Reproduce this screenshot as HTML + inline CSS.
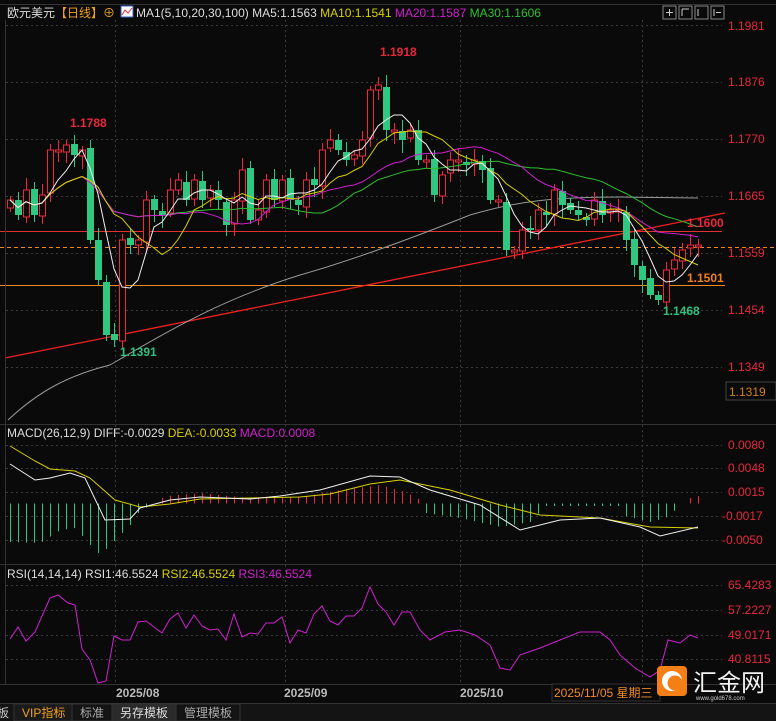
<!DOCTYPE html>
<html><head><meta charset="utf-8"><style>
html,body{margin:0;padding:0;background:#0a0a0a;width:776px;height:721px;overflow:hidden;font-family:"Liberation Sans","Noto Sans CJK SC",sans-serif}
svg{position:absolute;left:0;top:0}
</style></head><body>
<svg id="s" width="776" height="721" xmlns="http://www.w3.org/2000/svg" font-family="Liberation Sans, Noto Sans CJK SC, sans-serif">
<rect width="776" height="721" fill="#0a0a0a"/>
<g id="grid" stroke="#3a3a3a" stroke-dasharray="2,3" stroke-width="1"></g>
<g id="main"></g>
<line x1="0" y1="424.5" x2="776" y2="424.5" stroke="#333"/>
<line x1="0" y1="564.5" x2="776" y2="564.5" stroke="#333"/>
<line x1="0" y1="684.5" x2="776" y2="684.5" stroke="#333"/>
<line x1="5.5" y1="20" x2="5.5" y2="684" stroke="#333"/>
<line x1="0" y1="4.5" x2="776" y2="4.5" stroke="#333"/>
<text x="7" y="17" font-size="12"><tspan fill="#ddd">欧元美元</tspan><tspan fill="#f0a020">【日线】</tspan><tspan fill="#f0a020">⊕</tspan></text>
<rect x="121" y="6" width="12" height="11" fill="#fff" stroke="#3060c0"/>
<polyline points="122,15 125,10 128,13 132,8" fill="none" stroke="#e03040"/>
<text x="136" y="17" font-size="12" fill="#ddd">MA1(5,10,20,30,100) MA5:1.1563 <tspan fill="#d8d000">MA10:1.1541</tspan> <tspan fill="#d020d0">MA20:1.1587</tspan> <tspan fill="#30c030">MA30:1.1606</tspan></text>
<g fill="none" stroke="#888">
<rect x="663" y="6" width="13" height="13"/><rect x="679" y="6" width="13" height="13"/><rect x="695" y="6" width="13" height="13"/><rect x="711" y="6" width="13" height="13"/></g>
<g stroke="#ccc" stroke-width="1"><line x1="666" y1="12.5" x2="673" y2="12.5"/><line x1="669.5" y1="9" x2="669.5" y2="16"/><line x1="682" y1="9" x2="682" y2="16"/><line x1="682" y1="9" x2="689" y2="9"/><line x1="698" y1="9" x2="698" y2="16"/><line x1="714" y1="9" x2="714" y2="16"/><line x1="716" y1="12.5" x2="721" y2="12.5"/></g>
<g font-size="12" fill="#e8283c">
<text x="728" y="30">1.1981</text><text x="728" y="86">1.1876</text><text x="728" y="143">1.1770</text><text x="728" y="200">1.1665</text><text x="728" y="257">1.1559</text><text x="728" y="314">1.1454</text><text x="728" y="371">1.1349</text>
</g>
<rect x="726" y="382" width="50" height="18" fill="#0a0a0a" stroke="#444"/>
<text x="729" y="396" font-size="12" fill="#d08020">1.1319</text>
<g font-size="12" font-weight="bold">
<text x="380" y="56" fill="#e8283c">1.1918</text>
<text x="70" y="127" fill="#e8283c">1.1788</text>
<text x="120" y="356" fill="#30c080">1.1391</text>
<text x="663" y="315" fill="#30c080">1.1468</text>
<text x="687" y="227" fill="#e8283c">1.1600</text>
<text x="687" y="282" fill="#f08020">1.1501</text>
</g>
<text x="7" y="437" font-size="12" fill="#ddd">MACD(26,12,9) DIFF:-0.0029 <tspan fill="#d8d000">DEA:-0.0033</tspan> <tspan fill="#d020d0">MACD:0.0008</tspan></text>
<g font-size="12" fill="#e8283c"><text x="728" y="449">0.0080</text><text x="728" y="472">0.0048</text><text x="728" y="496">0.0015</text><text x="722" y="520">-0.0017</text><text x="722" y="544">-0.0050</text></g>
<text x="7" y="578" font-size="12" fill="#ddd">RSI(14,14,14) RSI1:46.5524 <tspan fill="#d8d000">RSI2:46.5524</tspan> <tspan fill="#d020d0">RSI3:46.5524</tspan></text>
<g font-size="12" fill="#e8283c"><text x="728" y="589">65.4283</text><text x="728" y="614">57.2227</text><text x="728" y="639">49.0171</text><text x="728" y="663">40.8115</text></g>
<g font-size="12" font-weight="bold" fill="#bbb"><text x="116" y="697">2025/08</text><text x="284" y="697">2025/09</text><text x="460" y="697">2025/10</text></g>
<rect x="552" y="684" width="108" height="17" fill="#0a0a0a" stroke="#333"/>
<text x="554" y="697" font-size="12" fill="#f08a20">2025/11/05 星期三</text>
<rect x="657" y="666" width="30" height="30" rx="4" fill="#f57f17"/>
<circle cx="672" cy="681" r="10" fill="#fff"/>
<circle cx="675" cy="683" r="7.5" fill="#f57f17"/>
<text x="693" y="691" font-size="24" fill="#f2f2f2" font-family="Noto Sans CJK SC, sans-serif">汇金网</text>
<text x="696" y="700" font-size="6" fill="#ccc">www.gold678.com</text>
<rect x="0" y="703" width="776" height="18" fill="#141414"/>
<line x1="0" y1="703.5" x2="776" y2="703.5" stroke="#333"/>
<g font-size="12"><text x="-3" y="717" fill="#ccc">板</text>
<rect x="14" y="704" width="58" height="17" fill="#1a1a1a" stroke="#333"/><text x="22" y="717" fill="#f0a020">VIP指标</text>
<rect x="72" y="704" width="40" height="17" fill="#141414" stroke="#333"/><text x="80" y="717" fill="#aaa">标准</text>
<rect x="112" y="704" width="64" height="17" fill="#2a2a2a" stroke="#333"/><text x="120" y="717" fill="#ddd">另存模板</text>
<rect x="176" y="704" width="64" height="17" fill="#141414" stroke="#333"/><text x="184" y="717" fill="#aaa">管理模板</text></g>
</svg>
<script>
(function(){
var NS="http://www.w3.org/2000/svg",M=document.getElementById('main'),G=document.getElementById('grid');
function el(p,t,a){var e=document.createElementNS(NS,t);for(var k in a)e.setAttribute(k,a[k]);p.appendChild(e);return e;}
[25,82,139,196,253,310,367,445,468,492,516,540,585,610,635,659].forEach(function(y){el(G,'line',{x1:6,y1:y+.5,x2:722,y2:y+.5});});
[115,285,460,642].forEach(function(x){el(G,'line',{x1:x+.5,y1:20,x2:x+.5,y2:684});});
var cy=[200,215,190,215,195,150,150,145,155,150,240,280,335,340,240,245,240,200,210,215,190,180,200,180,200,190,200,225,200,170,220,210,180,200,180,200,205,180,185,150,140,150,160,155,140,90,85,130,130,140,130,160,160,195,175,160,160,165,160,170,200,200,250,250,230,230,210,215,190,205,210,215,220,200,215,210,210,240,265,280,295,300,270,260,250,245,245];
var n=cy.length,x0=10,dx=8;
function px(i){return x0+i*dx;}
el(M,'line',{x1:0,y1:231.5,x2:722,y2:231.5,stroke:'#e03030'});
el(M,'line',{x1:0,y1:247.5,x2:776,y2:247.5,stroke:'#f08a20','stroke-dasharray':'4,3'});
el(M,'line',{x1:0,y1:285.5,x2:725,y2:285.5,stroke:'#f08a20'});
el(M,'line',{x1:5,y1:358,x2:725,y2:213,stroke:'#f02020','stroke-width':1.3});
el(M,'path',{d:'M8,420 C40,390 70,375 110,365 C170,330 220,300 300,275 C360,258 420,235 470,215 C520,200 560,197 620,197 L698,198',fill:'none',stroke:'#999','stroke-width':1});
for(var i=0;i<n;i++){
 var c=cy[i],o=i?cy[i-1]+((i*7)%5-2):c+8,x=px(i);
 if(Math.abs(o-c)<2)o=c+2;
 var up=c<o,hi=Math.min(o,c)-4-(i*13%9),lo=Math.max(o,c)+4+(i*11%10);
 var col=up?'#f0283c':'#30c880';
 el(M,'line',{x1:x+.5,y1:hi,x2:x+.5,y2:lo,stroke:col});
 if(up)el(M,'rect',{x:x-2.5,y:c,width:6,height:o-c,fill:'#0a0a0a',stroke:col});
 else el(M,'rect',{x:x-3,y:o,width:7,height:c-o,fill:col});
}
function ma(p){var r=[];for(var i=0;i<n;i++){var s=0,k=0;for(var j=Math.max(0,i-p+1);j<=i;j++){s+=cy[j];k++;}r.push(s/k);}return r;}
function line(arr,col){var d='';arr.forEach(function(v,i){d+=(i?'L':'M')+px(i)+','+v.toFixed(1);});el(M,'path',{d:d,fill:'none',stroke:col,'stroke-width':1});}
line(ma(30),'#30c030');line(ma(20),'#d020d0');line(ma(10),'#d8d000');line(ma(5),'#f0f0f0');
function interp(pts,x){if(x<=pts[0][0])return pts[0][1];for(var i=1;i<pts.length;i++){if(x<=pts[i][0]){var a=pts[i-1],b=pts[i];return a[1]+(b[1]-a[1])*(x-a[0])/(b[0]-a[0]);}}return pts[pts.length-1][1];}
function pl(pts,col){var d='';pts.forEach(function(p,i){d+=(i?'L':'M')+p[0]+','+p[1];});el(M,'path',{d:d,fill:'none',stroke:col,'stroke-width':1});}
// MACD histogram
var H=[[10,542],[40,543],[60,530],[75,528],[90,545],[100,555],[115,540],[130,525],[140,510],[150,506],[165,496],[200,493],[250,498],[300,497],[340,490],[380,485],[405,492],[420,500],[425,513],[460,518],[500,527],[530,522],[545,506],[620,506],[625,516],[650,522],[665,518],[680,506],[690,498],[698,496]];
for(var x=10;x<=698;x+=8){var y=interp(H,x);if(Math.abs(y-503.5)<1.5)continue;el(M,'line',{x1:x+.5,y1:503.5,x2:x+.5,y2:y,stroke:y<503.5?'#f0283c':'#30c880'});}
pl([[10,446],[35,461],[50,469],[75,471],[90,478],[115,500],[140,507],[170,504],[200,499],[250,498],[300,497],[330,494],[370,484],[400,480],[450,490],[500,505],[540,515],[600,518],[650,527],[698,528]],'#d8d000');
pl([[10,464],[35,480],[50,478],[70,473],[85,478],[105,520],[130,519],[140,508],[170,500],[200,497],[250,499],[280,496],[320,490],[370,476],[400,477],[430,490],[480,505],[520,530],[560,520],[600,518],[640,527],[660,536],[698,527]],'#f0f0f0');
pl([[10,639],[18,627],[26,641],[35,632],[50,598],[58,595],[68,603],[75,605],[82,649],[90,660],[98,683],[106,681],[114,636],[122,640],[130,640],[138,622],[146,621],[162,633],[170,619],[178,613],[186,628],[194,615],[202,626],[210,630],[218,629],[226,640],[234,614],[242,637],[250,633],[258,634],[266,623],[274,623],[282,617],[290,643],[298,630],[306,633],[314,614],[322,606],[330,621],[338,625],[346,616],[354,616],[362,608],[370,587],[378,604],[386,612],[394,625],[402,612],[410,612],[420,630],[430,640],[445,632],[460,630],[475,635],[490,645],[500,668],[510,670],[520,655],[540,648],[560,640],[580,632],[600,632],[610,640],[620,655],[635,668],[650,677],[660,670],[668,640],[680,643],[690,635],[698,638]],'#d020d0');
})();
</script>
</body></html>
